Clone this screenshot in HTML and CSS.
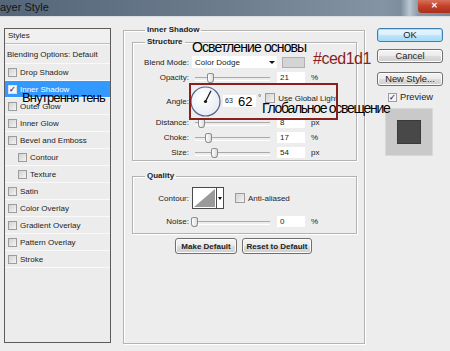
FILE: index.html
```html
<!DOCTYPE html>
<html lang="ru">
<head>
    <meta charset="UTF-8">
    <title>Layer Style</title>
    <link rel="stylesheet" href="styles.css">
</head>
<body>
    <div class="titlebar">
        <span class="title">ayer Style</span>
        <span class="glass"></span>
        <span class="close">&#10005;</span>
    </div>

    <div class="dialog">
        <div class="styles-panel">
            <div class="sp-head">Styles</div>
            <div class="sp-row sp-blend">Blending Options: Default</div>
            <div class="sp-row"><i class="cb"></i>Drop Shadow</div>
            <div class="sp-row selected"><i class="cb checked">&#10003;</i>Inner Shadow</div>
            <div class="sp-row"><i class="cb"></i>Outer Glow</div>
            <div class="sp-row"><i class="cb"></i>Inner Glow</div>
            <div class="sp-row"><i class="cb"></i>Bevel and Emboss</div>
            <div class="sp-row sub"><i class="cb"></i>Contour</div>
            <div class="sp-row sub"><i class="cb"></i>Texture</div>
            <div class="sp-row"><i class="cb"></i>Satin</div>
            <div class="sp-row"><i class="cb"></i>Color Overlay</div>
            <div class="sp-row"><i class="cb"></i>Gradient Overlay</div>
            <div class="sp-row"><i class="cb"></i>Pattern Overlay</div>
            <div class="sp-row"><i class="cb"></i>Stroke</div>
        </div>

        <fieldset class="group main-group">
            <legend>Inner Shadow</legend>

            <fieldset class="group structure">
                <legend>Structure</legend>
                <div class="row r-blend">
                    <span class="lbl">Blend Mode:</span>
                    <span class="select">Color Dodge<b class="arrow"></b></span>
                    <span class="swatch"></span>
                </div>
                <div class="row r-opacity">
                    <span class="lbl">Opacity:</span>
                    <span class="slider"><i class="thumb" style="left: 15px"></i></span>
                    <span class="num">21</span>
                    <span class="unit">%</span>
                </div>
                <div class="row r-angle">
                    <span class="lbl">Angle:</span>
                    <svg class="dial" width="31" height="31" viewBox="0 0 31 31">
                        <defs>
                            <radialGradient id="dialfill" cx="0.4" cy="0.35" r="0.7">
                                <stop offset="0" stop-color="#ffffff"/>
                                <stop offset="1" stop-color="#e6ebf2"/>
                            </radialGradient>
                        </defs>
                        <circle cx="15.5" cy="15.5" r="14.5" fill="url(#dialfill)" stroke="#52648a" stroke-width="1.2"/>
                        <line x1="15.5" y1="15.5" x2="21" y2="4.8" stroke="#1a1a1a" stroke-width="1.3"/>
                        <circle cx="15.5" cy="15.5" r="1.6" fill="#1a1a1a"/>
                    </svg>
                    <span class="num angle-num">63</span>
                    <span class="unit deg">&deg;</span>
                    <i class="cb"></i>
                    <span class="cb-text">Use Global Light</span>
                </div>
                <div class="row r-distance">
                    <span class="lbl">Distance:</span>
                    <span class="slider"><i class="thumb" style="left: 6px"></i></span>
                    <span class="num">8</span>
                    <span class="unit">px</span>
                </div>
                <div class="row r-choke">
                    <span class="lbl">Choke:</span>
                    <span class="slider"><i class="thumb" style="left: 13px"></i></span>
                    <span class="num">17</span>
                    <span class="unit">%</span>
                </div>
                <div class="row r-size">
                    <span class="lbl">Size:</span>
                    <span class="slider"><i class="thumb" style="left: 19px"></i></span>
                    <span class="num">54</span>
                    <span class="unit">px</span>
                </div>
            </fieldset>

            <fieldset class="group quality">
                <legend>Quality</legend>
                <div class="row r-contour">
                    <span class="lbl">Contour:</span>
                    <span class="contour">
                        <svg width="23" height="20" viewBox="0 0 23 20">
                            <rect x="0" y="0" width="23" height="20" fill="#ffffff"/>
                            <polygon points="1,19 22,1 22,19" fill="#9a9a9a"/>
                        </svg>
                        <span class="contour-drop"><b class="arrow"></b></span>
                    </span>
                    <i class="cb"></i>
                    <span class="cb-text">Anti-aliased</span>
                </div>
                <div class="row r-noise">
                    <span class="lbl">Noise:</span>
                    <span class="slider"><i class="thumb" style="left: -1px"></i></span>
                    <span class="num">0</span>
                    <span class="unit">%</span>
                </div>
            </fieldset>

            <div class="actions">
                <span class="btn btn-make">Make Default</span>
                <span class="btn btn-reset">Reset to Default</span>
            </div>
        </fieldset>

        <div class="side">
            <span class="btn side-btn ok">OK</span>
            <span class="btn side-btn cancel">Cancel</span>
            <span class="btn side-btn newstyle">New Style...</span>
            <div class="preview-check"><i class="cb checked">&#10003;</i>Preview</div>
            <div class="preview-box"><span class="preview-inner"></span></div>
        </div>
    </div>

    <!-- пометки поверх скриншота -->
    <div class="note note-blend">Осветление основы</div>
    <div class="note note-color">#ced1d1</div>
    <div class="note note-inner">Внутрення тень</div>
    <div class="note note-angle">62</div>
    <div class="note note-global">Глобальное освещение</div>
    <div class="frame"></div>
</body>
</html>
```

FILE: styles.css
```css
*{
    margin: 0;
    padding: 0;
    box-sizing: border-box;
}
body{
    width: 450px;
    height: 351px;
    overflow: hidden;
    position: relative;
    background: #ededed;
    font-family: "Liberation Sans", Arial, sans-serif;
    font-size: 8px;
    color: #1c1c1c;
}

/* title bar */
.titlebar{
    height: 17px;
    display: flex;
    align-items: center;
    position: relative;
    background: linear-gradient(to right, #56667a 0%, #6c7c8d 50%, #8594a4 85%, #7d8d9c 89%, #b9c6d1 91%, #8a99a7 93%, #7b8a98 100%);
    border-bottom: 1px solid #d8dde2;
}
.title{
    font-size: 11px;
    color: #141414;
    margin-top: -3px;
}
.glass{
    flex: 1;
}
.close{
    width: 32px;
    height: 13px;
    align-self: flex-start;
    background: linear-gradient(#d7705a, #c2402a 50%, #a8301d);
    border-radius: 0 0 0 4px;
    color: #fff;
    font-size: 8px;
    font-weight: bold;
    text-align: center;
    line-height: 12px;
}

/* layout */
.dialog{
    display: flex;
    align-items: flex-start;
    padding: 11px 0 0 4px;
}

/* styles list */
.styles-panel{
    width: 107px;
    height: 315px;
    border: 1px solid #5c5c5c;
    background: #ececec;
}
.sp-head{
    height: 15px;
    line-height: 14px;
    padding-left: 3px;
    border-bottom: 1px solid #bdbdbd;
    background: #f0f0f0;
}
.sp-row{
    height: 17px;
    display: flex;
    align-items: center;
    padding-left: 3px;
    border-bottom: 1px solid #f9f9f9;
}
.sp-blend{
    height: 20px;
    padding-left: 2px;
    border-top: 1px solid #fafafa;
}
.sp-row.sub{
    padding-left: 13px;
}
.sp-row.selected{
    background: #3399ff;
    color: #ffffff;
}
.cb{
    display: inline-block;
    width: 9px;
    height: 9px;
    margin-right: 3px;
    border: 1px solid #9c9c9c;
    background: linear-gradient(135deg, #d2d2d2, #f4f4f4);
    font-style: normal;
    font-size: 8px;
    line-height: 7px;
    text-align: center;
    color: #2a3f8f;
    flex: none;
}
.cb.checked{
    background: #f6f6f6;
    font-weight: bold;
}
.selected .cb{
    border-color: #e0e0e0;
}

/* group boxes */
.group{
    border: 1px solid #b3b3b3;
    box-shadow: 1px 1px 0 #ffffff, inset 1px 1px 0 #ffffff;
}
.group > legend{
    font-weight: bold;
    line-height: 10px;
    padding: 0 2px;
}
.main-group{
    width: 242px;
    height: 319px;
    margin: -3px 0 0 12px;
    padding: 2px 7px 0 8px;
}
.main-group > legend{
    margin-left: 13px;
}
.structure > legend,
.quality > legend{
    margin-left: 12px;
}
.structure{
    padding: 0 0 2px 0;
}
.quality{
    margin-top: 10px;
    padding: 0 0 6px 0;
}

/* rows */
.row{
    display: flex;
    align-items: center;
    height: 11px;
    margin-top: 4px;
}
.lbl{
    width: 56px;
    text-align: right;
    margin-right: 3px;
    flex: none;
}
.r-blend{
    height: 12px;
    margin-top: 9px;
}
.r-angle{
    height: 32px;
    margin-top: 2px;
}
.r-distance{
    margin-top: 0;
}
.r-contour{
    height: 22px;
    margin-top: 6px;
}
.r-noise{
    margin-top: 7px;
}

.select{
    width: 85px;
    height: 12px;
    background: #ffffff;
    display: flex;
    align-items: center;
    padding-left: 3px;
    position: relative;
}
.arrow{
    display: block;
    width: 0;
    height: 0;
    border-left: 3px solid transparent;
    border-right: 3px solid transparent;
    border-top: 3px solid #111;
}
.select .arrow{
    position: absolute;
    right: 2px;
    top: 5px;
}
.swatch{
    width: 23px;
    height: 11px;
    margin-left: 5px;
    background: #d3d4d4;
    border: 1px solid #b0b0b0;
}

.slider{
    width: 78px;
    height: 11px;
    position: relative;
    flex: none;
}
.slider::before{
    content: "";
    position: absolute;
    left: 3px;
    right: 0;
    top: 5px;
    height: 2px;
    border-top: 1px solid #a9a9a9;
    border-bottom: 1px solid #ffffff;
}
.thumb{
    position: absolute;
    top: 1px;
    width: 7px;
    height: 10px;
    border: 1px solid #8a8a8a;
    border-radius: 3px 3px 3px 3px / 2px 2px 4px 4px;
    background: linear-gradient(to right, #ffffff, #dcdcdc);
}
.num{
    width: 28px;
    height: 11px;
    margin-left: 7px;
    background: #ffffff;
    padding-left: 3px;
    line-height: 11px;
    flex: none;
}
.unit{
    margin-left: 6px;
}

.dial{
    display: block;
    margin-left: -2px;
    flex: none;
}
.angle-num{
    width: 33px;
    height: 12px;
    margin-left: 2px;
    line-height: 12px;
    font-size: 7px;
    padding-left: 2px;
}
.deg{
    margin-left: 2px;
    align-self: flex-start;
    margin-top: 8px;
}
.r-angle .cb{
    margin-left: 4px;
    width: 10px;
    height: 10px;
    margin-top: -6px;
}
.r-angle .cb-text{
    margin-top: -6px;
}

.contour{
    display: flex;
    height: 22px;
    border: 1px solid #4a4a4a;
    background: #ffffff;
}
.contour svg{
    display: block;
}
.contour-drop{
    width: 7px;
    border-left: 1px solid #4a4a4a;
    display: flex;
    align-items: center;
    justify-content: center;
}
.contour-drop .arrow{
    border-left-width: 2px;
    border-right-width: 2px;
    border-top-width: 3px;
}
.r-contour .cb{
    margin-left: 11px;
    width: 10px;
    height: 10px;
}

/* buttons */
.btn{
    display: flex;
    align-items: center;
    justify-content: center;
    height: 16px;
    border: 1px solid #707070;
    border-radius: 3px;
    background: linear-gradient(#f4f4f4 0%, #ebebeb 50%, #dddddd 51%, #cfcfcf 100%);
    box-shadow: inset 0 0 0 1px #fcfcfc;
    font-weight: bold;
    color: #222;
}
.actions{
    display: flex;
    gap: 5px;
    margin: 4px 0 0 43px;
}
.btn-make{
    width: 62px;
}
.btn-reset{
    width: 70px;
}

.side{
    width: 66px;
    margin-left: 12px;
    display: flex;
    flex-direction: column;
}
.side-btn{
    height: 14px;
    font-weight: normal;
    font-size: 9.3px;
}
.ok{
    border-color: #3c7fb1;
    box-shadow: inset 0 0 0 1px #a7e0f6;
    background: linear-gradient(#eaf6fd 0%, #d9f0fc 50%, #bee6fd 51%, #a7d9f5 100%);
}
.cancel{
    margin-top: 7px;
}
.newstyle{
    margin-top: 9px;
}
.preview-check{
    display: flex;
    align-items: center;
    margin: 6px 0 0 11px;
    height: 10px;
    font-size: 9.3px;
}
.preview-box{
    width: 48px;
    height: 48px;
    margin: 6px 0 0 8px;
    background: #c9c9c9;
    border: 1px solid #d9d9d9;
    display: flex;
    align-items: center;
    justify-content: center;
}
.preview-inner{
    width: 24px;
    height: 24px;
    background: #484848;
    border: 1px solid #3a3a3a;
}

/* annotations over the screenshot */
.note{
    position: absolute;
    font-family: "Liberation Sans", Arial, sans-serif;
    color: #000;
    white-space: nowrap;
    line-height: 1;
}
.note-blend{
    left: 192px;
    top: 40px;
    font-size: 14px;
    letter-spacing: -0.9px;
}
.note-color{
    left: 313px;
    top: 51px;
    font-size: 16px;
    color: #8a1d1d;
    letter-spacing: -0.5px;
}
.note-inner{
    left: 22px;
    top: 91px;
    font-size: 13px;
    letter-spacing: -0.85px;
}
.note-angle{
    left: 238px;
    top: 95px;
    font-size: 13px;
}
.note-global{
    left: 262px;
    top: 101px;
    font-size: 14px;
    letter-spacing: -1.3px;
}
.frame{
    position: absolute;
    left: 189px;
    top: 83px;
    width: 149px;
    height: 37px;
    border: 2px solid #8a1f1f;
}
```
